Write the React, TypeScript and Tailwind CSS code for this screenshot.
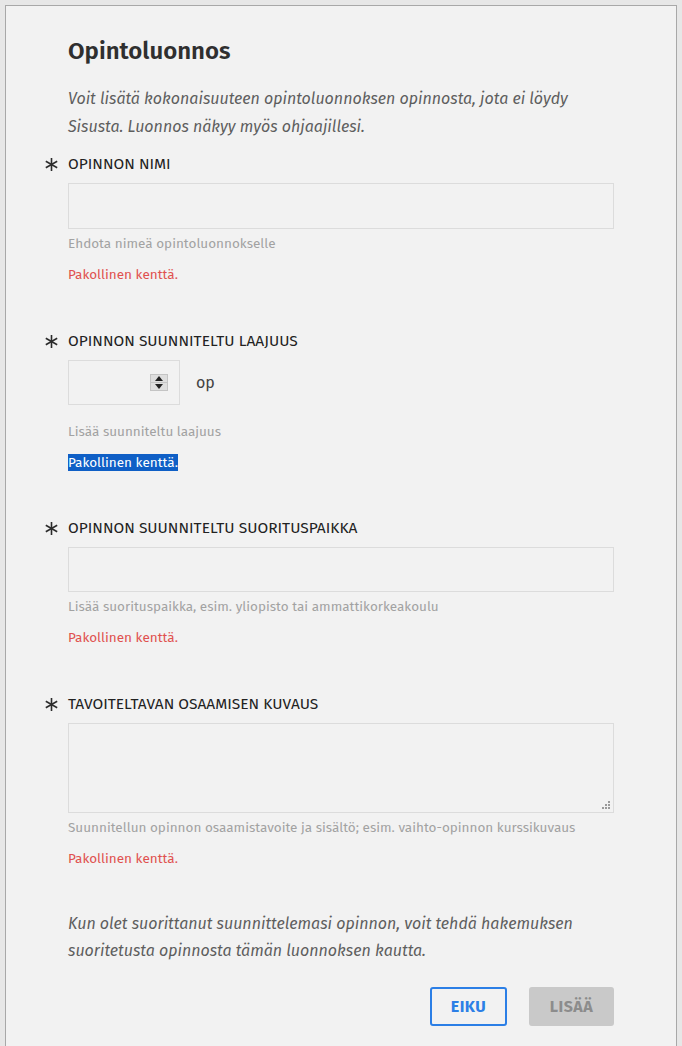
import React from "react";

const Asterisk = () => (
  <svg width="13" height="13" viewBox="0 0 13 13" className="shrink-0">
    <g stroke="#2b2b2b" strokeWidth="1.6" strokeLinecap="butt">
      <line x1="6.5" y1="0" x2="6.5" y2="13" />
      <line x1="0.8" y1="3.3" x2="12.2" y2="9.7" />
      <line x1="0.8" y1="9.7" x2="12.2" y2="3.3" />
    </g>
  </svg>
);

const Label = ({ children }: { children: React.ReactNode }) => (
  <div className="flex items-center -ml-[23px] gap-[10px] h-[20px]">
    <Asterisk />
    <span className="text-[15.5px] leading-[20px] font-normal text-[#222222]">{children}</span>
  </div>
);

const Help = ({ children, className = "" }: { children: React.ReactNode; className?: string }) => (
  <div className={"text-[13.5px] leading-[20px] text-[#a2a2a2] " + className}>{children}</div>
);

const ErrorText = ({ selected = false }: { selected?: boolean }) => (
  <div className="mt-[11px] text-[13.5px] leading-[20px] text-[#e0514f]">
    {selected ? (
      <span className="bg-[#0f5fc6] text-white">Pakollinen kenttä.</span>
    ) : (
      "Pakollinen kenttä."
    )}
  </div>
);

export default function App() {
  return (
    <div
      className="min-h-[1046px] bg-[#e7e7e7] pt-[5px] px-[5px] overflow-hidden"
      style={{ fontFamily: '"Fira Sans", "Open Sans", "Noto Sans", sans-serif' }}
    >
      <div className="bg-[#f2f2f2] border-t border-l border-r border-[#a8a8a8] min-h-[1041px] pl-[62px] pr-[62px] pt-[29px]">
        <h1 className="text-[24px] leading-[32px] font-semibold text-[#2f2f2f]">Opintoluonnos</h1>
        <p className="mt-[18px] text-[16px] leading-[28px] italic text-[#5e5e5e]">
          Voit lisätä kokonaisuuteen opintoluonnoksen opinnosta, jota ei löydy Sisusta. Luonnos näkyy myös ohjaajillesi.
        </p>

        {/* Field 1 */}
        <div className="mt-[13px]">
          <Label>OPINNON NIMI</Label>
          <div className="mt-[9px] h-[46px] border border-[#dcdcdc] bg-[#f2f2f2]" />
          <Help className="mt-[5px]">Ehdota nimeä opintoluonnokselle</Help>
          <ErrorText />
        </div>

        {/* Field 2 */}
        <div className="mt-[46px]">
          <Label>OPINNON SUUNNITELTU LAAJUUS</Label>
          <div className="mt-[9px] flex items-center">
            <div className="w-[112px] h-[45px] border border-[#dcdcdc] flex items-center justify-end pr-[11px]">
              <div className="w-[18px] h-[17px] bg-[#dedede] border border-[#c4c4c4] flex flex-col items-center justify-center">
                <div className="h-[7px] w-full flex items-center justify-center border-b border-[#c4c4c4]">
                  <svg width="8" height="5" viewBox="0 0 8 5">
                    <path d="M4 0 L8 5 L0 5 Z" fill="#222" />
                  </svg>
                </div>
                <div className="h-[7px] w-full flex items-center justify-center">
                  <svg width="8" height="5" viewBox="0 0 8 5">
                    <path d="M0 0 L8 0 L4 5 Z" fill="#222" />
                  </svg>
                </div>
              </div>
            </div>
            <span className="ml-[16px] text-[16px] text-[#444]">op</span>
          </div>
          <Help className="mt-[17px]">Lisää suunniteltu laajuus</Help>
          <ErrorText selected />
        </div>

        {/* Field 3 */}
        <div className="mt-[45px]">
          <Label>OPINNON SUUNNITELTU SUORITUSPAIKKA</Label>
          <div className="mt-[9px] h-[45px] border border-[#dcdcdc]" />
          <Help className="mt-[5px]">Lisää suorituspaikka, esim. yliopisto tai ammattikorkeakoulu</Help>
          <ErrorText />
        </div>

        {/* Field 4 */}
        <div className="mt-[46px]">
          <Label>TAVOITELTAVAN OSAAMISEN KUVAUS</Label>
          <div className="mt-[9px] h-[90px] border border-[#dcdcdc] flex items-end justify-end pr-[3px] pb-[3px]">
            <svg width="8" height="8" viewBox="0 0 8 8">
              <g fill="#9a9a9a">
                <rect x="6" y="0" width="2" height="2" />
                <rect x="3" y="3" width="2" height="2" />
                <rect x="6" y="3" width="2" height="2" />
                <rect x="0" y="6" width="2" height="2" />
                <rect x="3" y="6" width="2" height="2" />
                <rect x="6" y="6" width="2" height="2" />
              </g>
            </svg>
          </div>
          <Help className="mt-[5px]">Suunnitellun opinnon osaamistavoite ja sisältö; esim. vaihto-opinnon kurssikuvaus</Help>
          <ErrorText />
        </div>

        <p className="mt-[41px] text-[16px] leading-[27px] italic text-[#5e5e5e]">
          Kun olet suorittanut suunnittelemasi opinnon, voit tehdä hakemuksen suoritetusta opinnosta tämän luonnoksen kautta.
        </p>

        <div className="mt-[23px] flex justify-end gap-[22px]">
          <button className="w-[77px] h-[39px] border-[2px] border-[#2c7fe6] rounded-[3px] text-[#2c7fe6] text-[16px] font-bold tracking-[0.5px]">
            EIKU
          </button>
          <button className="w-[85px] h-[39px] bg-[#c9c9c9] rounded-[3px] text-[#8c8c8c] text-[16px] font-bold tracking-[0.5px]">
            LISÄÄ
          </button>
        </div>
      </div>
    </div>
  );
}
